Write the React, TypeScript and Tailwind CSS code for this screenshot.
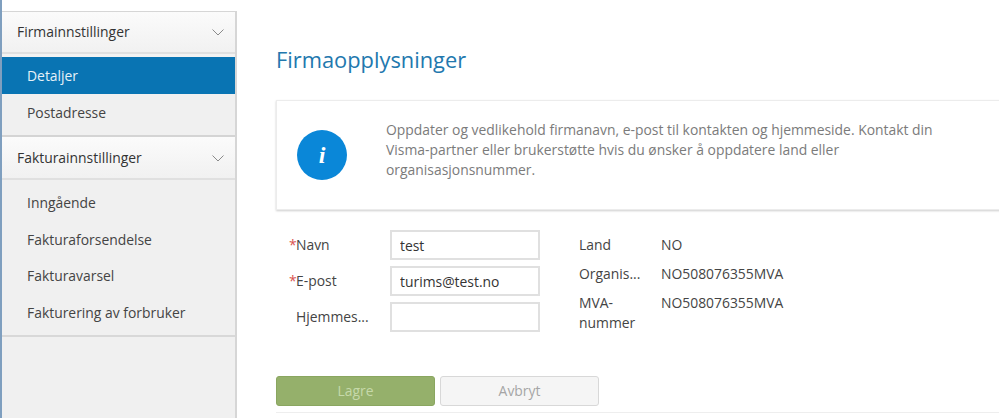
export default function App() {
  const header = "flex items-center justify-between bg-gradient-to-b from-[#fbfbfb] to-[#f1f1f1] pl-[15px] pr-[11px] text-[13.9px] text-[#333]";
  const item = "flex h-[36.7px] items-center pl-[25px] text-[13.9px] text-[#444]";
  const Chevron = () => (
    <svg width="12" height="7" viewBox="0 0 12 7" fill="none" stroke="#8a8a8a" strokeWidth="1"><path d="M0.5 0.5 L6 6 L11.5 0.5" /></svg>
  );
  return (
    <div className="flex h-[418px] w-[999px] overflow-hidden bg-white font-['Open_Sans',sans-serif]">
      <div className="w-[2px] shrink-0 bg-[#7f9fbf]" />
      <aside className="mt-[11px] flex w-[235px] shrink-0 flex-col border-r-2 border-t border-[#d6d6d6] bg-[#f0f0f0]">
        <div className={`${header} h-[40px] pt-px`}>
          <span>Firmainnstillinger</span>
          <Chevron />
        </div>
        <div className="h-[5px] border-t-2 border-[#e0e0e0] bg-[#f2f2f2]" />
        <div className={`${item} !h-[37px] bg-[#0974b3] pt-px !text-[#e6f1f8]`}>Detaljer</div>
        <div className={`${item} !h-[38px]`}>Postadresse</div>
        <div className="mt-[3px] border-t-2 border-[#d4d4d4]" />
        <div className={`${header} h-[41px] pt-px`}>
          <span>Fakturainnstillinger</span>
          <Chevron />
        </div>
        <div className="mb-[5px] border-t-2 border-[#e0e0e0]" />
        <div className={item}>Inngående</div>
        <div className={item}>Fakturaforsendelse</div>
        <div className={item}>Fakturavarsel</div>
        <div className={item}>Fakturering av forbruker</div>
        <div className="mt-[3px] border-t-2 border-[#d8d8d8]" />
      </aside>
      <main className="ml-[39px] flex min-w-0 flex-1 flex-col pt-[45px]">
        <h1 className="text-[21.85px] leading-[30px] text-[#2278ae]">Firmaopplysninger</h1>
        <section className="mt-[25px] flex h-[110px] w-[760px] shrink-0 items-center border border-[#ececec] bg-white pl-[20px] shadow-[0_1px_2px_rgba(0,0,0,0.2)]">
          <div className="flex h-[50px] w-[50px] shrink-0 items-center justify-center rounded-full bg-[#0a87d8] font-['Liberation_Serif',serif] text-[24px] font-bold italic leading-none text-white">i</div>
          <p className="ml-[39px] mb-[10px] w-[580px] text-[13.9px] leading-[20px] text-[#7b7b7b]">
            Oppdater og vedlikehold firmanavn, e-post til kontakten og hjemmeside. Kontakt din Visma-partner eller brukerstøtte hvis du ønsker å oppdatere land eller organisasjonsnummer.
          </p>
        </section>
        <div className="mt-[20px] flex h-[102px] text-[13.9px] text-[#444]">
          <div className="flex w-[264px] flex-col gap-[6px] pl-[13px]">
            {[
              ["Navn", "test", true],
              ["E-post", "turims@test.no", true],
              ["Hjemmes...", "", false],
            ].map(([label, value, req]) => (
              <div key={label as string} className="flex h-[30px] items-center">
                <label className="w-[101px] pl-[7px]">
                  <span className="relative">
                    {req ? <span className="absolute left-[-7px] text-[#d9534f]">*</span> : null}
                    {label}
                  </span>
                </label>
                <input
                  readOnly
                  value={value as string}
                  className="h-[30px] w-[150px] border-2 border-[#e0e0e0] bg-white px-[8px] text-[13.9px] text-[#333] outline-none"
                />
              </div>
            ))}
          </div>
          <div className="ml-[39px] grid grid-cols-[82px_auto] content-start gap-y-[9px] pt-[5px] leading-[20px]">
            <div>Land</div>
            <div>NO</div>
            <div>Organis...</div>
            <div>NO508076355MVA</div>
            <div className="w-[70px]">MVA-nummer</div>
            <div>NO508076355MVA</div>
          </div>
        </div>
        <div className="mt-[44px] flex gap-[5px] text-[13.9px]">
          <button className="h-[30px] w-[159px] rounded-[3px] border border-[#8aa660] bg-[#95b06b] text-[#c6d9aa]">Lagre</button>
          <button className="h-[30px] w-[159px] rounded-[3px] border border-[#d8d8d8] bg-[#f5f5f5] text-[#a5a5a5]">Avbryt</button>
        </div>
        <div className="mt-[6px] border-t border-[#eeeeee]" />
      </main>
    </div>
  );
}
